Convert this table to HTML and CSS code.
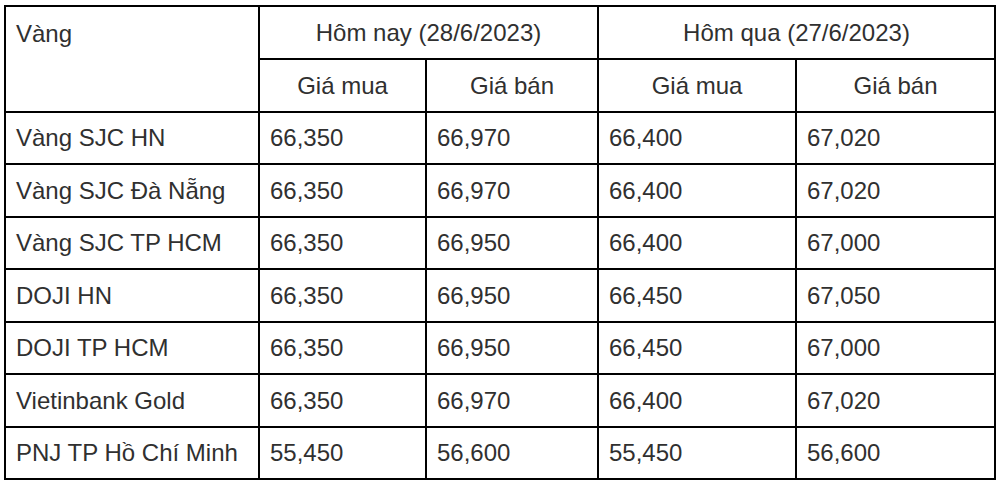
FILE: index.html
```html
<!DOCTYPE html>
<html lang="vi">
<head>
<meta charset="utf-8">
<title>Giá vàng</title>
<link rel="stylesheet" href="styles.css">
</head>
<body>
<table class="gold">
  <colgroup>
    <col class="c1"><col class="c2"><col class="c3"><col class="c4"><col class="c5">
  </colgroup>
  <thead>
    <tr class="h53">
      <th class="name" rowspan="2">Vàng</th>
      <th colspan="2">Hôm nay (28/6/2023)</th>
      <th colspan="2">Hôm qua (27/6/2023)</th>
    </tr>
    <tr class="h53">
      <th>Giá mua</th><th>Giá bán</th><th>Giá mua</th><th>Giá bán</th>
    </tr>
  </thead>
  <tbody>
    <tr class="h52"><td>Vàng SJC HN</td><td>66,350</td><td>66,970</td><td>66,400</td><td>67,020</td></tr>
    <tr class="h53"><td>Vàng SJC Đà Nẵng</td><td>66,350</td><td>66,970</td><td>66,400</td><td>67,020</td></tr>
    <tr class="h52"><td>Vàng SJC TP HCM</td><td>66,350</td><td>66,950</td><td>66,400</td><td>67,000</td></tr>
    <tr class="h53"><td>DOJI HN</td><td>66,350</td><td>66,950</td><td>66,450</td><td>67,050</td></tr>
    <tr class="h52"><td>DOJI TP HCM</td><td>66,350</td><td>66,950</td><td>66,450</td><td>67,000</td></tr>
    <tr class="h53"><td>Vietinbank Gold</td><td>66,350</td><td>66,970</td><td>66,400</td><td>67,020</td></tr>
    <tr class="h52"><td>PNJ TP Hồ Chí Minh</td><td>55,450</td><td>56,600</td><td>55,450</td><td>56,600</td></tr>
  </tbody>
</table>
</body>
</html>
```
FILE: styles.css
```css
html, body {
  margin: 0;
  padding: 0;
  background: #ffffff;
}
body {
  padding: 5px 0 0 4px;
  font-family: "Liberation Sans", Arial, sans-serif;
  font-size: 24px;
  color: #303030;
}
.gold {
  border-collapse: collapse;
  table-layout: fixed;
  width: 990px;
}
.c1 { width: 254px; }
.c2 { width: 167px; }
.c3 { width: 172px; }
.c4 { width: 198px; }
.c5 { width: 199px; }
.gold th,
.gold td {
  border: 2px solid #000;
  padding: 0 10px;
  font-weight: normal;
  line-height: 28px;
  white-space: nowrap;
  vertical-align: middle;
}
.gold th {
  text-align: center;
}
.gold th.name {
  text-align: left;
  vertical-align: top;
  padding-top: 13px;
}
.gold td {
  text-align: left;
}
.h53 { height: 53px; }
.h52 { height: 52px; }
```
